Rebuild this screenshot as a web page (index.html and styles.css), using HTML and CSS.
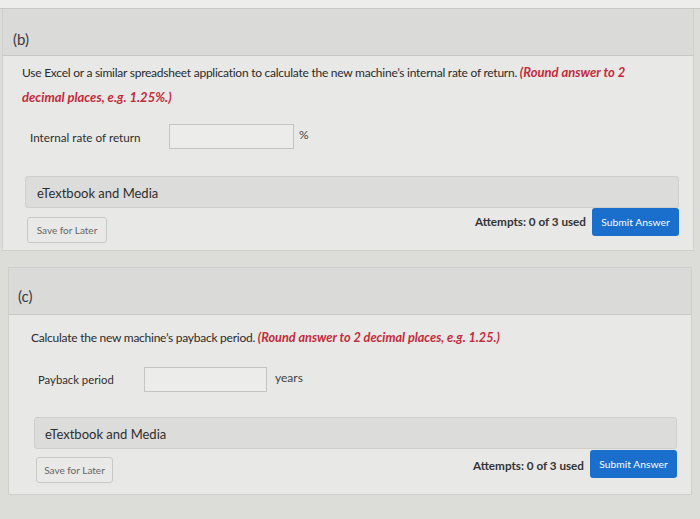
FILE: index.html
```html
<!DOCTYPE html>
<html>
<head>
<meta charset="utf-8">
<link rel="stylesheet" href="styles.css">
</head>
<body>
<div class="page">
  <div class="top-strip"></div>
  <section class="card card-b">
    <div class="card-head">(b)</div>
    <div class="card-body body-b">
      <p class="question">Use Excel or a similar spreadsheet application to calculate the new machine’s internal rate of return. <em class="hint">(Round answer to 2 decimal places, e.g. 1.25%.)</em></p>
      <div class="answer-row row-b">
        <span class="label label-b">Internal rate of return</span>
        <span class="input input-b"></span>
        <span class="unit">%</span>
      </div>
      <div class="media media-b">eTextbook and Media</div>
      <div class="footer">
        <button class="save">Save for Later</button>
        <div class="submit-group">
          <span class="attempts">Attempts: 0 of 3 used</span>
          <button class="submit">Submit Answer</button>
        </div>
      </div>
    </div>
  </section>
  <section class="card card-c">
    <div class="card-head head-c">(c)</div>
    <div class="card-body body-c">
      <p class="question q-c">Calculate the new machine’s payback period. <em class="hint">(Round answer to 2 decimal places, e.g. 1.25.)</em></p>
      <div class="answer-row row-c">
        <span class="label label-c">Payback period</span>
        <span class="input input-c"></span>
        <span class="unit unit-c">years</span>
      </div>
      <div class="media media-c">eTextbook and Media</div>
      <div class="footer footer-c">
        <button class="save">Save for Later</button>
        <div class="submit-group">
          <span class="attempts">Attempts: 0 of 3 used</span>
          <button class="submit">Submit Answer</button>
        </div>
      </div>
    </div>
  </section>
</div>
</body>
</html>
```

FILE: styles.css
```css
* { box-sizing: border-box; }
html, body { margin: 0; padding: 0; }
body {
  width: 700px;
  height: 519px;
  overflow: hidden;
  background: #dcdcd9;
  font-family: Lato, "Liberation Sans", sans-serif;
  color: #2e2e2e;
}
.page {
  display: flex;
  flex-direction: column;
}
.top-strip {
  height: 9px;
  background: #ededeb;
  border-bottom: 1px solid #c9c9c6;
}
.card {
  background: #e8e8e6;
  border: 1px solid #cfcfcc;
  border-top: none;
}
.card-b {
  margin-left: 2px;
  width: 692px;
  height: 242px;
}
.card-head {
  height: 47px;
  background: #dadad8;
  border-bottom: 1px solid #c8c8c5;
  font-size: 15px;
  padding: 21px 0 0 10px;
  color: #3a3a40;
}
.card-body {
  display: flex;
  flex-direction: column;
}
.body-b { padding: 4px 0 0 0; }
.question {
  margin: 0;
  font-size: 12px;
  letter-spacing: -0.25px;
  line-height: 24px;
  color: #2b2b2b;
  padding-left: 19px;
  width: 640px;
}
.hint {
  color: #c42a3c;
  font-weight: 700;
  letter-spacing: 0;
  font-size: 13px;
}
.answer-row {
  display: flex;
  align-items: center;
}
.row-b { margin-top: 14px; padding-left: 27px; }
.label { font-size: 11.7px; color: #2e2e2e; }
.label-b { width: 139px; }
.input {
  display: block;
  height: 25px;
  background: #ececea;
  border: 1px solid #c4c4c1;
}
.input-b { width: 125px; }
.unit {
  font-size: 12px;
  margin-left: 5px;
  align-self: flex-start;
  margin-top: 3px;
  color: #444;
}
.media {
  height: 32px;
  background: #dcdcda;
  border: 1px solid #cfcfcc;
  border-radius: 3px;
  font-size: 13px;
  padding: 8px 0 0 11px;
  color: #2e2e2e;
}
.media-b { margin: 27px 14px 0 22px; }
.footer {
  display: flex;
  justify-content: space-between;
  align-items: flex-start;
  margin: 0 14px 0 24px;
}
.save {
  margin-top: 9px;
  height: 26px;
  width: 80px;
  padding: 0;
  background: #e9e9e7;
  border: 1px solid #c8c8c5;
  border-radius: 3px;
  font-family: inherit;
  font-size: 10px;
  color: #666;
}
.submit-group {
  display: flex;
  align-items: center;
  gap: 6px;
}
.attempts {
  font-size: 11.7px;
  font-weight: 700;
  color: #333;
  margin-top: -2px;
}
.submit {
  height: 28px;
  width: 87px;
  padding: 0;
  border: none;
  border-radius: 3px;
  background: #1a6fcc;
  color: #fff;
  font-family: inherit;
  font-size: 10.3px;
}
.card-c {
  margin: 16px 0 0 8px;
  width: 684px;
  height: 228px;
  border-top: 1px solid #cfcfcc;
}
.head-c { padding-left: 9px; padding-top: 19px; }
.q-c { padding-left: 22px; margin-top: 10px; font-size: 12px; }
.q-c .hint { font-size: 12.7px; }
.row-c { margin-top: 17px; padding-left: 29px; }
.label-c { width: 106px; font-size: 11.3px; }
.input-c { width: 123px; }
.unit-c { margin-left: 8px; margin-top: 3px; }
.media-c { margin: 25px 14px 0 25px; }
.media-c { padding-left: 10px; }
.footer-c { margin: 1px 14px 0 27px; }
.footer-c .save { width: 77px; margin-top: 7px; }
.footer-c .attempts { margin-top: 1px; }
```
